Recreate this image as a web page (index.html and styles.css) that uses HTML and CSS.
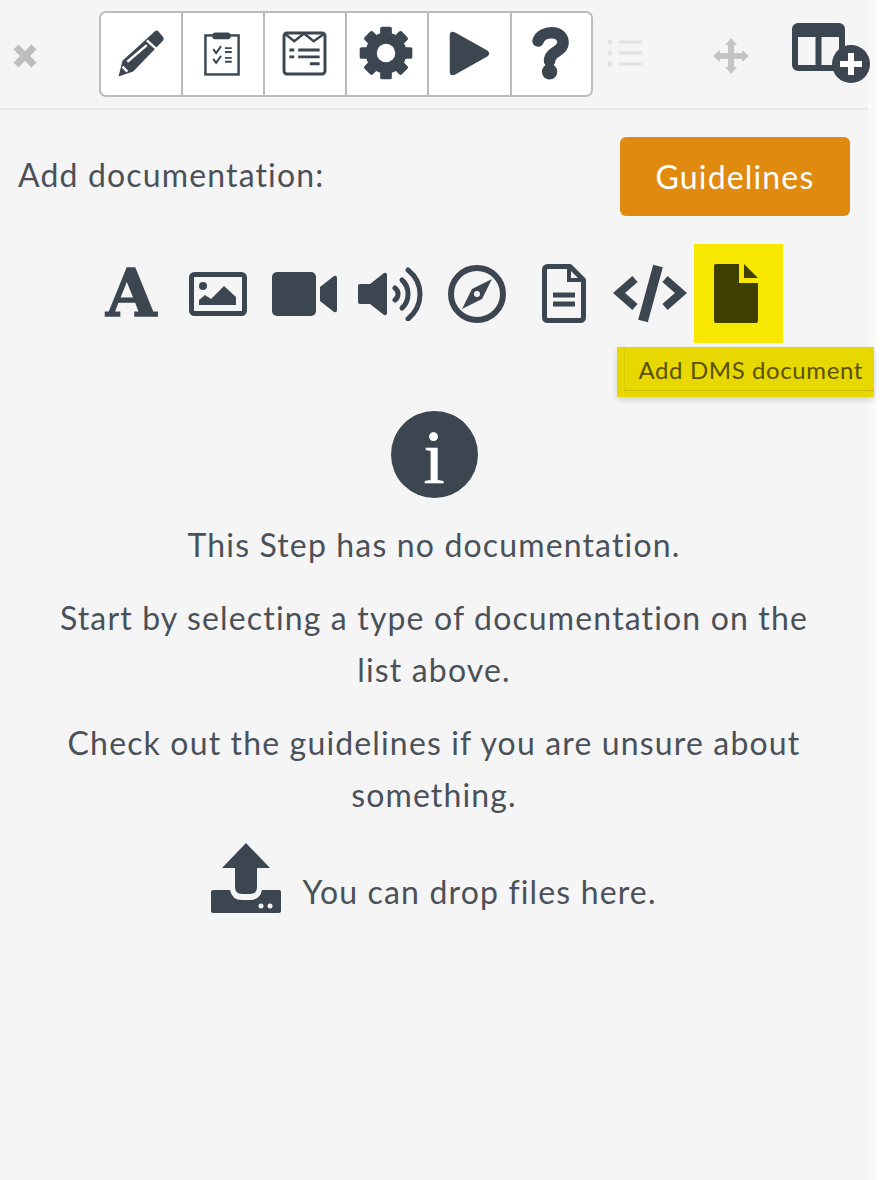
FILE: index.html
```html
<!DOCTYPE html>
<html lang="en">

<head>
	<meta charset="UTF-8">
	<title>Add documentation</title>
	<link rel="stylesheet" href="styles.css">
</head>

<body>
	<div class="panel">

		<div class="topbar">
			<svg class="close-icon" viewBox="0 0 24 24"><path d="M3 3L21 21M21 3L3 21" /></svg>

			<div class="tools">
				<div class="tool">
					<svg viewBox="0 0 82 84">
						<path class="fill" d="M18 65L22 49L55 19Q57 17 59 19L64 25Q65 27 63 29L33 60Z" />
						<path class="cut" d="M27 50L47 33M47 28L57 37M22 55L27 60" />
					</svg>
				</div>
				<div class="tool">
					<svg viewBox="0 0 82 84">
						<rect class="line" x="23" y="23" width="34" height="40" stroke-width="2.500" />
						<rect class="fill" x="30" y="20" width="19" height="7" rx="3.500" />
						<path class="line" stroke-width="2" d="M31 37L34 41L39 34M31 47L34 51L39 44" />
						<path class="line" stroke-width="2" d="M43 36H50M43 40H50M43 46H50M43 50H50" />
					</svg>
				</div>
				<div class="tool">
					<svg viewBox="0 0 82 84">
						<rect class="line" x="19.500" y="20.500" width="42" height="42" rx="3" stroke-width="3" />
						<path class="line" stroke-width="2.500" d="M20 21L30 29L40 21L50 29L61 21" />
						<path class="line" stroke-width="3" d="M25 38H30M34 38H56M25 45H30M34 45H56M46 52H56" />
					</svg>
				</div>
				<div class="tool">
					<svg viewBox="0 0 82 84">
						<g class="fill">
							<circle cx="40" cy="41" r="21" />
							<rect x="34" y="14" width="12" height="54" rx="2" />
							<rect x="34" y="14" width="12" height="54" rx="2" transform="rotate(45 40 41)" />
							<rect x="34" y="14" width="12" height="54" rx="2" transform="rotate(90 40 41)" />
							<rect x="34" y="14" width="12" height="54" rx="2" transform="rotate(135 40 41)" />
						</g>
						<circle class="hole" cx="40" cy="41" r="9.500" />
					</svg>
				</div>
				<div class="tool tool-wide">
					<svg viewBox="0 0 82 84">
						<path class="fill" d="M21 23Q21 17 27 20L59 38Q63 41 59 44L27 62Q21 65 21 59Z" />
					</svg>
				</div>
				<div class="tool tool-last">
					<svg viewBox="0 0 82 84">
						<path class="line" stroke-width="12" stroke-linecap="round" d="M27 29C31 18 52 17 53 30C53 41 39 39 39 50" />
						<circle class="fill" cx="39" cy="61" r="8" />
					</svg>
				</div>
			</div>

			<svg class="list-icon" viewBox="0 0 36 28">
				<path d="M12 3H35M12 14H35M12 25H35" />
				<circle cx="3" cy="3" r="2.500" />
				<circle cx="3" cy="14" r="2.500" />
				<circle cx="3" cy="25" r="2.500" />
			</svg>

			<svg class="move-icon" viewBox="0 0 36 36">
				<path d="M18 0L24 7H21V15H29V12L36 18L29 24V21H21V29H24L18 36L12 29H15V21H7V24L0 18L7 12V15H15V7H12Z" />
			</svg>

			<svg class="layout-icon" viewBox="0 0 78 62">
				<rect class="line" x="3" y="3" width="47" height="42" rx="3" stroke-width="6" />
				<path class="line" stroke-width="6" d="M26.500 3V45" />
				<path class="line" stroke-width="12" d="M3 8H50" />
				<circle class="fill" cx="59" cy="41" r="19" />
				<path class="cut thick" d="M59 30V52M48 41H70" />
			</svg>
		</div>

		<div class="doc-head">
			<span class="doc-title">Add documentation:</span>
			<button class="guidelines" type="button">Guidelines</button>
		</div>

		<div class="doc-types">
			<div class="doc-type"><span class="type-letter">A</span></div>
			<div class="doc-type">
				<svg width="58" height="44" viewBox="0 0 58 44">
					<rect class="line" x="2.500" y="2.500" width="53" height="39" rx="3" stroke-width="5" />
					<circle class="fill" cx="14" cy="14" r="4" />
					<path class="fill" d="M10 33V28L16 23L22 27L35 14L47 25V33Z" />
				</svg>
			</div>
			<div class="doc-type">
				<svg width="65" height="44" viewBox="0 0 65 44">
					<rect class="fill" x="0" y="0" width="44" height="44" rx="5" />
					<path class="fill" d="M48 15L62 4Q65 3 65 6V38Q65 41 62 40L48 29Z" />
				</svg>
			</div>
			<div class="doc-type">
				<svg width="65" height="54" viewBox="0 0 65 54">
					<path class="fill" d="M2 17H12L26 6Q29 5 29 8V46Q29 49 26 48L12 37H2Q0 37 0 35V19Q0 17 2 17Z" />
					<path class="line" stroke-width="5" stroke-linecap="round" d="M37 21C41 24 41 30 37 33" />
					<path class="line" stroke-width="5" stroke-linecap="round" d="M44 13C52 20 52 34 44 41" />
					<path class="line" stroke-width="5" stroke-linecap="round" d="M50 3C66 16 66 38 50 52" />
				</svg>
			</div>
			<div class="doc-type">
				<svg width="58" height="58" viewBox="0 0 58 58">
					<circle class="line" cx="29" cy="29" r="26" stroke-width="6" />
					<path class="fill" d="M44 14L34 34L14 44L24 24Z" />
					<circle class="hole-grey" cx="29" cy="29" r="3" />
				</svg>
			</div>
			<div class="doc-type">
				<svg width="44" height="59" viewBox="0 0 44 59">
					<path class="line" stroke-width="5" stroke-linejoin="round" d="M28 2.500H6Q2.500 2.500 2.500 6V53Q2.500 56.500 6 56.500H38Q41.500 56.500 41.500 53V16Z" />
					<path class="line" stroke-width="4" d="M27 3V16H41" />
					<path class="line" stroke-width="5" d="M11 31H33M11 40H33" />
				</svg>
			</div>
			<div class="doc-type">
				<svg width="74" height="59" viewBox="0 0 74 59">
					<path class="line" stroke-width="8" d="M22 15L6 29L22 43M52 15L68 29L52 43" />
					<path class="line" stroke-width="10" d="M45 2L30 57" />
				</svg>
			</div>
			<div class="doc-type active">
				<svg width="44" height="59" viewBox="0 0 44 59">
					<path class="fill-dark" d="M2 0H25V19H44V57Q44 59 42 59H2Q0 59 0 57V2Q0 0 2 0Z" />
					<path class="fill-dark" d="M30 0L44 14H30Z" />
				</svg>
				<div class="tooltip"><span>Add DMS document</span></div>
			</div>
		</div>

		<div class="empty">
			<div class="info-badge">i</div>
			<p>This Step has no documentation.</p>
			<p>Start by selecting a type of documentation on the list above.</p>
			<p>Check out the guidelines if you are unsure about something.</p>
			<div class="drop">
				<svg width="70" height="70" viewBox="0 0 70 70">
					<path class="fill" d="M35 0L59 25H46V44Q46 51 39 51H31Q24 51 24 44V25H11Z" />
					<path class="fill" d="M2 47H19Q21 57 31 57H39Q49 57 51 47H68Q70 47 70 49V68Q70 70 68 70H2Q0 70 0 68V49Q0 47 2 47Z" />
					<circle class="hole-grey" cx="50" cy="63" r="2.500" />
					<circle class="hole-grey" cx="59" cy="63" r="2.500" />
				</svg>
				<span>You can drop files here.</span>
			</div>
		</div>

	</div>
</body>

</html>
```

FILE: styles.css
```css
* {
	margin: 0;
	padding: 0;
	box-sizing: border-box;
}

html,
body {
	height: 100%;
	background: #fff;
}

body {
	font-family: Lato, "Open Sans", sans-serif;
	color: #4b5158;
	letter-spacing: 1.150px;
}

.panel {
	width: 876px;
	height: 1180px;
	background: #f5f5f5;
	border-right: 8px solid #f9f9f9;
}

svg {
	display: block;
	flex: none;
}

.fill {
	fill: #3c4650;
}

.fill-dark {
	fill: #3f3f00;
}

.line {
	fill: none;
	stroke: #3c4650;
}

.cut {
	fill: none;
	stroke: #fff;
	stroke-width: 2.500;
}

.cut.thick {
	stroke-width: 6;
}

.hole {
	fill: #fff;
}

.hole-grey {
	fill: #f5f5f5;
}

/* top bar */
.topbar {
	display: flex;
	align-items: center;
	height: 110px;
	padding-left: 13px;
	border-bottom: 2px solid #e9e9e9;
}

.close-icon {
	width: 24px;
	height: 24px;
	margin-top: 4px;
	fill: none;
	stroke: #bdbdbd;
	stroke-width: 7;
}

.tools {
	display: flex;
	height: 86px;
	margin-left: 62px;
	margin-top: -1px;
	background: #fff;
	border: 2px solid #bcbcbc;
	border-radius: 7px;
}

.tool {
	width: 82px;
	border-left: 2px solid #bcbcbc;
}

.tool:first-child {
	width: 80px;
	border-left: none;
}

.tool-wide {
	width: 83px;
}

.tool-last {
	width: 81px;
}

.list-icon {
	width: 36px;
	height: 28px;
	margin-left: 14px;
	margin-top: -2px;
	fill: #e2e2e2;
	stroke: #e2e2e2;
}

.list-icon path {
	stroke-width: 3;
}

.list-icon circle {
	stroke: none;
}

.move-icon {
	width: 36px;
	height: 36px;
	margin-left: 70px;
	margin-top: 3px;
	fill: #c4c4c4;
}

.layout-icon {
	width: 78px;
	height: 62px;
	margin-left: 43px;
	overflow: visible;
}

/* heading row */
.doc-head {
	display: flex;
	align-items: center;
	justify-content: space-between;
	padding: 27px 18px 0 18px;
}

.doc-title {
	font-size: 32px;
	margin-top: -4px;
}

.guidelines {
	width: 230px;
	height: 79px;
	border: none;
	border-radius: 6px;
	background: #e08a10;
	color: #fff;
	font-family: inherit;
	font-size: 32px;
	letter-spacing: 1.150px;
}

/* documentation types */
.doc-types {
	display: flex;
	justify-content: center;
	height: 99px;
	margin-top: 28px;
}

.doc-type {
	position: relative;
	display: flex;
	align-items: center;
	justify-content: center;
	width: 86.500px;
	height: 99px;
}

.doc-type.active {
	width: 89.500px;
	margin-right: -3px;
	padding-right: 5px;
	background: #f8e800;
}

.type-letter {
	font-family: "DejaVu Serif", serif;
	font-weight: bold;
	font-size: 65px;
	line-height: 1;
	color: #3c4650;
	letter-spacing: 0;
	-webkit-text-stroke: 1.500px #3c4650;
}

.tooltip {
	position: absolute;
	top: 103px;
	left: -77px;
	width: 257px;
	height: 50px;
	padding-left: 7px;
	background: #e6d800;
	box-shadow: 0 3px 6px rgba(0, 0, 0, 0.15);
}

.tooltip span {
	display: block;
	height: 44px;
	padding-left: 14px;
	border-bottom: 1px solid #cdbf00;
	border-left: 1px solid #d8ca00;
	color: #5a5000;
	font-size: 24px;
	letter-spacing: 0.600px;
	line-height: 46px;
	white-space: nowrap;
}

/* empty message */
.empty {
	display: flex;
	flex-direction: column;
	align-items: center;
	padding: 68px 40px 0;
	text-align: center;
	font-size: 32px;
	line-height: 52px;
}

.info-badge {
	width: 87px;
	height: 87px;
	border-radius: 50%;
	background: #3c4650;
	color: #fff;
	font-family: "Liberation Serif", serif;
	font-size: 76px;
	line-height: 93px;
	letter-spacing: 0;
	-webkit-text-stroke: 0.700px #fff;
}

.empty p {
	margin-top: 21px;
}

.drop {
	display: flex;
	align-items: flex-start;
	gap: 21px;
	margin-top: 22px;
}

.drop span {
	margin-top: 23px;
}
```
